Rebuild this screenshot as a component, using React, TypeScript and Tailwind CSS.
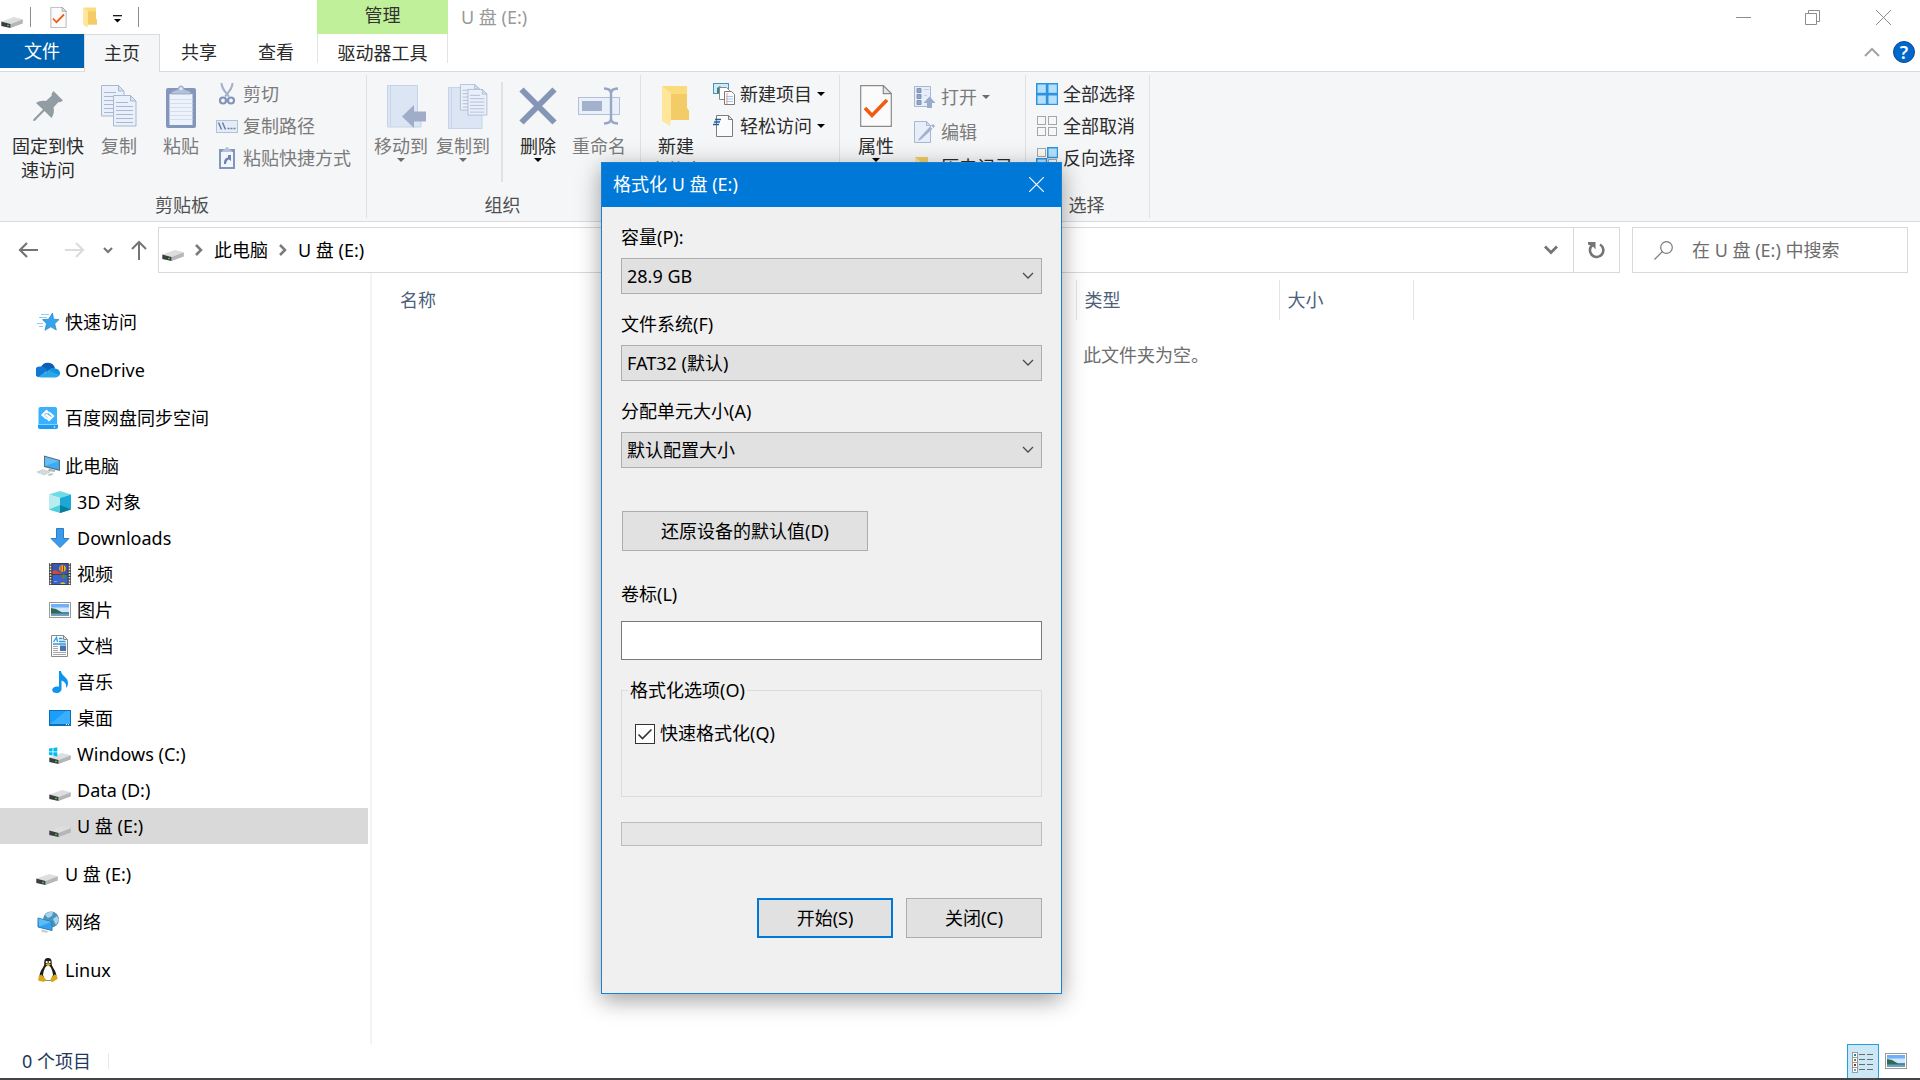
import type { ReactNode } from "react";

type IconProps = { className?: string };

/* ---------- Icons ---------- */

function DriveShape() {
  return (
    <>
      <path d="M0.5 15.5 13 11l8.8 2.2L9.5 18z" fill="#dcdee0" />
      <path d="M9.5 18 21.8 13.2v4.3L9.5 22z" fill="#b4b6b8" />
      <path d="M0.3 15.5 9.5 18v4L0.3 20z" fill="#3b3d3e" />
      <rect x="6" y="18.8" width="2" height="1.4" fill="#3ec43a" />
    </>
  );
}

function DriveIcon() {
  return (
    <svg viewBox="0 0 22 22" className="size-[22px] shrink-0">
      <DriveShape />
    </svg>
  );
}

function WindowsDriveIcon() {
  return (
    <svg viewBox="0 0 22 22" className="size-[22px] shrink-0">
      <g transform="translate(0 -1)">
        <DriveShape />
      </g>
      <path d="M0 5.6 3.6 5v3.4H0zM4.4 4.9 8.3 4.2v4.2H4.4zM0 9.2h3.6v3.4L0 12.1zM4.4 9.2h3.9v4.2l-3.9-.7z" fill="#00bcf2" />
    </svg>
  );
}

function CheckDocIcon({ className = "h-[21px] w-[17px]" }: IconProps) {
  return (
    <svg viewBox="0 0 32 42" className={className}>
      <path d="M.7.7h22.6l8 8v32.6H.7z" fill="#fbfbfb" stroke="#8a8a8a" strokeWidth="1.2" />
      <path d="M23.3.7v8h8z" fill="#e6e6e6" stroke="#8a8a8a" strokeWidth="1.2" />
      <path d="M5 23l7 7.5L27 15" fill="none" stroke="#f25c10" strokeWidth="3.6" />
    </svg>
  );
}

function FolderIcon({ className = "h-[21px] w-[15px]" }: IconProps) {
  return (
    <svg viewBox="0 0 30 40" className={className}>
      <path d="M1 0h25v22l2 3v9H1z" fill="#fbdc7b" />
      <path d="M9 8h17v14l2 3v9H9z" fill="#f3cc68" />
      <path d="M1 0l9 7v25l-1 8-8-5z" fill="#ffe69b" />
    </svg>
  );
}

function Caret({ className = "text-black" }: IconProps) {
  return (
    <svg viewBox="0 0 8 4" className={`h-1 w-2 shrink-0 ${className}`}>
      <path d="M0 0h8L4 4z" fill="currentColor" />
    </svg>
  );
}

function PinIcon() {
  return (
    <svg viewBox="0 0 30 30" className="size-[30px]">
      <path d="M20.500 0 30 9.500l-3 1.800-1.500-.3-5 5.500c1 4 .3 7-2 10.500l-7-7-9.500 9.800-1.800.2.200-1.800L10 18.500l-7-6.500c3-2.300 6.500-2.800 10-2l5.700-5.200-.2-1.800z" fill="#929ca3" />
    </svg>
  );
}

function PageLines({ x, y }: { x: number; y: number }) {
  return (
    <g transform={`translate(${x} ${y})`}>
      <path d="M.5.5h17l5.500 5.500v25H.5z" fill="#eaf0fa" stroke="#a9b7d4" />
      <path d="M17.500.5V6H23z" fill="#d5e0f2" stroke="#a9b7d4" />
      <path d="M3 7.500h12M3 11.500h17M3 15.500h17M3 19.500h17M3 23.500h17M3 27.500h17" stroke="#a9b7d4" />
    </g>
  );
}

function CopyIcon() {
  return (
    <svg viewBox="0 0 36 42" className="h-[42px] w-9">
      <PageLines x={0} y={0} />
      <PageLines x={12} y={10} />
    </svg>
  );
}

function PasteIcon() {
  return (
    <svg viewBox="0 0 30 43" className="h-[43px] w-[30px]">
      <rect x="0" y="3" width="30" height="40" rx="2" fill="#8496bb" />
      <path d="M3.500 9h23v31h-23z" fill="#eef3fb" />
      <path d="M3.500 14.500h23M3.500 18.500h23M3.500 22.500h23M3.500 26.500h23M3.500 30.500h23M3.500 34.500h23" stroke="#d3deef" />
      <path d="M5 9c0-4 5-3 7-5 0-4 6-4 6 0 2 2 7 1 7 5z" fill="#b5c1da" stroke="#8fa0c2" strokeWidth=".8" />
      <circle cx="15" cy="3.800" r="1.300" fill="#eef3fb" />
    </svg>
  );
}

function ScissorsIcon() {
  return (
    <svg viewBox="0 0 22 22" className="size-[22px]">
      <path d="M5.500 0c0 5 3 8 7.500 13.500M16.500 0c0 5-3 8-7.500 13.500" fill="none" stroke="#a5b1c9" strokeWidth="2" />
      <circle cx="7" cy="17.500" r="3" fill="none" stroke="#8295b8" strokeWidth="2.200" />
      <circle cx="15" cy="17.500" r="3" fill="none" stroke="#8295b8" strokeWidth="2.200" />
    </svg>
  );
}

function PathIcon() {
  return (
    <svg viewBox="0 0 22 22" className="size-[22px]">
      <rect x=".5" y="5.500" width="21" height="12" fill="#e4ecf8" stroke="#b3c0da" />
      <path d="M2.500 7.500l3 7M6.500 7.500l3 7" stroke="#6a7ea6" strokeWidth="1.500" />
      <path d="M11.500 13.500h2M14.500 13.500h2M17.500 13.500h2" stroke="#6a7ea6" strokeWidth="1.600" />
    </svg>
  );
}

function PasteShortcutIcon() {
  return (
    <svg viewBox="0 0 22 22" className="size-[22px]">
      <path d="M3 2h16v20H3z" fill="#8496bb" />
      <path d="M5 5h12v15H5z" fill="#f1f5fc" />
      <path d="M6 5c0-2.500 3-2 3.500-4 .8-1.300 2.200-1.300 3 0 .5 2 3.500 1.500 3.500 4z" fill="#b5c1da" />
      <path d="M8 17c0-4 1-6 4-6.500V8h3v6l-2-1.500c-2 .5-2.500 2-3 4.500z" fill="#6f83aa" />
    </svg>
  );
}

function MoveToIcon() {
  return (
    <svg viewBox="-12 0 52 43" className="h-[43px] w-[52px]">
      <path d="M.5.500h30v27l3.500 3V42H.5z" fill="#dbe5f4" stroke="#c6d3e8" />
      <path d="M3.500.500V42" stroke="#c9d6ea" />
      <path d="M15 31.500 27 20v6.500h12v10H27V43z" fill="#9fadc9" />
    </svg>
  );
}

function CopyToIcon() {
  return (
    <svg viewBox="-10 0 50 45" className="h-[45px] w-[50px]">
      <path d="M.5 3.500h30v24l3.500 3V44.500H.5z" fill="#dbe5f4" stroke="#c6d3e8" />
      <path d="M3.500 3.500V45" stroke="#c9d6ea" />
      <g transform="translate(12 0) scale(.84)">
        <PageLines x={0} y={0} />
        <PageLines x={9} y={6} />
      </g>
    </svg>
  );
}

function DeleteIcon() {
  return (
    <svg viewBox="0 0 38 38" className="size-[38px]">
      <path d="M2.500 2.500l33 33M35.500 2.500l-33 33" stroke="#8495b6" strokeWidth="6" />
    </svg>
  );
}

function RenameIcon() {
  return (
    <svg viewBox="0 0 42 38" className="h-[38px] w-[42px]">
      <rect x=".5" y="10.500" width="41" height="17" fill="#eaf0fa" stroke="#b3c0da" />
      <rect x="4" y="14" width="20" height="10" fill="#a3b1cc" />
      <path d="M26 1.500c4 0 7 1 7 5v25c0 4-3 5-7 5M40 1.500c-4 0-7 1-7 5v25c0 4 3 5 7 5" fill="none" stroke="#96a6c4" strokeWidth="2.400" />
    </svg>
  );
}

function NewItemIcon() {
  return (
    <svg viewBox="0 0 22 22" className="size-[22px]">
      <rect x=".5" y=".5" width="15" height="10" fill="#cfeaf8" stroke="#4c90b8" />
      <path d="M4 10V5l3-2 2 3v4z" fill="#3b8579" />
      <path d="M6.500 4.500h7l3 3v9h-10z" fill="#fff" stroke="#8a8a8a" />
      <path d="M11.500 8.500h7l3 3v10h-10z" fill="#fff" stroke="#7a7a7a" />
      <path d="M13 13.500h7M13 16h7M13 18.500h7" stroke="#9cc2ee" />
      <path d="M14 10v11" stroke="#ee9a93" />
    </svg>
  );
}

function EasyAccessIcon() {
  return (
    <svg viewBox="0 0 22 22" className="size-[22px]">
      <path d="M3.500.500h12l4 4v17h-16z" fill="#fbfbfb" stroke="#7d7d7d" />
      <path d="M15.500.500v4h4z" fill="#e8e8e8" stroke="#7d7d7d" />
      <path d="M2 4.500h6M1 7h6M0 9.500h6" stroke="#1f5fa0" strokeWidth="1.400" />
    </svg>
  );
}

function OpenIcon() {
  return (
    <svg viewBox="0 0 22 22" className="size-[22px]">
      <path d="M.5.500h16v20H.5z" fill="#e6eefa" stroke="#a9b7d4" />
      <path d="M3 2.500h4v4H3zM3 8.500h4v4H3zM3 14.500h4v4H3z" fill="#93a4c4" stroke="#7f92b6" />
      <path d="M10 3.500h5M10 9.500h3" stroke="#c2cee2" />
      <path d="M15.500 10.500 21.500 17H18v5h-5v-5H9.500z" fill="#9babc9" />
    </svg>
  );
}

function EditIcon() {
  return (
    <svg viewBox="0 0 22 22" className="size-[22px]">
      <path d="M.5.500h12l4 4v17H.5z" fill="#e6eefa" stroke="#a9b7d4" />
      <path d="M12.500.500v4h4z" fill="#d3deef" stroke="#a9b7d4" />
      <path d="M5 17.500 16 5.500l2.500 2.500L7 18.500l-3 1.500zM17 4.500l2-1.500 2 2-1.500 2z" fill="#a3b2ce" />
    </svg>
  );
}

function HistoryIcon() {
  return (
    <svg viewBox="0 0 22 22" className="size-[22px]">
      <path d="M1 1h13v19H1z" fill="#f1cb66" />
      <path d="M1 1l6 5v15l-6-2z" fill="#ffe69b" />
      <circle cx="15" cy="15" r="6" fill="#4aa564" />
    </svg>
  );
}

function TilesIcon({ on }: { on: boolean[] }) {
  return (
    <svg viewBox="0 0 22 22" className="size-[22px]">
      {on.map((lit, i) => (
        <rect
          key={i}
          x={(i % 2) * 11 + (lit ? 0.75 : 1.5)}
          y={Math.floor(i / 2) * 11 + (lit ? 0.75 : 1.5)}
          width={lit ? 9.8 : 8}
          height={lit ? 9.8 : 8}
          fill={lit ? "#b4e0fd" : "#f7f7f7"}
          stroke={lit ? "#2e93de" : "#a6a6a6"}
          strokeWidth={lit ? 1.5 : 1}
        />
      ))}
    </svg>
  );
}

function StarIcon() {
  return (
    <svg viewBox="0 0 24 22" className="h-[22px] w-6 shrink-0">
      <path d="M16.500 2l1 6.200 5.500.4-4.300 4.200 1.600 6.200-5.500-3.200-5.800 3.500 1.500-6.500L6.500 8.600l6-.4z" fill="#35a4ec" stroke="#1d84d0" strokeWidth=".7" />
      <path d="M5 3.500h8M3 6.500h8M1 12.500h6M3 15.500h4" stroke="#8fcdf5" />
    </svg>
  );
}

function OneDriveIcon() {
  return (
    <svg viewBox="0 0 24 22" className="h-[22px] w-6 shrink-0">
      <path d="M5 8a7.500 7.500 0 0 1 14 1.300L12 14z" fill="#0a5fb4" />
      <path d="M4.500 7.500c3 0 5 1 7.500 3.500L3 18.300a5.300 5.300 0 0 1 1.500-10.800z" fill="#0f78d4" />
      <path d="M12 11c3-2.500 6-2.500 8-1.300a4.500 4.500 0 0 1 3 7.300L12 12z" fill="#1490df" />
      <path d="M2.500 17.500 13 11.200 23.300 16c-.7 1.500-2 2.500-3.800 2.500h-14c-1.200 0-2.200-.3-3-1z" fill="#28a8ea" />
    </svg>
  );
}

function BaiduIcon() {
  return (
    <svg viewBox="0 0 24 24" className="size-6 shrink-0">
      <rect x="2.500" y="1" width="18.500" height="22" rx="2" fill="#3bb0ff" />
      <path d="M2 18.500h20V21a2 2 0 0 1-2 2H4a2 2 0 0 1-2-2z" fill="#1c9bf7" />
      <path d="M2 18.500h20" stroke="#8ad4ff" />
      <path d="M12.500 7 10.500 5 6.500 9l4 3.500M11 12l2 2 4-4-4-3.500M9.500 8.500l4.500 3" fill="none" stroke="#fff" strokeWidth="2.200" />
      <circle cx="18.500" cy="21" r=".8" fill="#fff" />
    </svg>
  );
}

function ComputerIcon() {
  return (
    <svg viewBox="0 0 24 22" className="h-[22px] w-6 shrink-0">
      <path d="M8 .5 24 5v11L8 12z" fill="#5d6f7d" />
      <path d="M9 2l14 4v8.500L9 11z" fill="#3cabf2" />
      <path d="M9 2l14 4-14 5z" fill="#62c0f8" />
      <path d="M13 13.500l6 1.500v2l-7-1z" fill="#b0b8bd" />
      <path d="M1 17l6-2.500L14 17l-6 3z" fill="#d5dade" stroke="#aab1b6" strokeWidth=".7" strokeDasharray="1.500 1" />
      <path d="M11 20l4-2 3 1-4 2z" fill="#bfc6ca" />
    </svg>
  );
}

function CubeIcon() {
  return (
    <svg viewBox="0 0 22 22" className="size-[22px] shrink-0">
      <path d="M11 0l11 3.500L11 7 0 3.500z" fill="#6edbe6" />
      <path d="M0 3.500 11 7v15L0 18.500z" fill="#b9ecf0" />
      <path d="M11 7l11-3.500v15L11 22z" fill="#1aa9d6" />
      <path d="M11 14l11 4.500L11 22z" fill="#077f9c" />
      <path d="M0 18.500 11 14v8z" fill="#4fd0dc" />
    </svg>
  );
}

function DownloadIcon() {
  return (
    <svg viewBox="0 0 22 22" className="size-[22px] shrink-0">
      <path d="M7.500 1.500h7v10H20L11 20.500 2 11.500h5.500z" fill="#3d9ae8" stroke="#2a7fcb" />
    </svg>
  );
}

function VideoIcon() {
  return (
    <svg viewBox="0 0 22 22" className="size-[22px] shrink-0">
      <rect width="22" height="22" fill="#3f3f3f" />
      <path d="M1.500 0v22M20.500 0v22" stroke="#e9e9e9" strokeWidth="1.600" strokeDasharray="1.600 1.200" />
      <rect x="3.500" y="1" width="15" height="10" fill="#3457b8" />
      <rect x="3.500" y="12" width="15" height="9" fill="#3765cf" />
      <path d="M3.500 8l3-1 4 2.500 4 1.500h-11z" fill="#d2493c" />
      <circle cx="13.500" cy="5.500" r="3.300" fill="#e9b81c" />
      <path d="M11.500 3h1v5h-1zM14 2.500h1v6h-1z" fill="#b8281d" />
      <circle cx="14.500" cy="13.500" r="2.300" fill="#2f8f48" />
      <path d="M14 12h1v4h-1z" fill="#e0452c" />
      <path d="M11 21a3 3 0 0 1 5.500 0z" fill="#f0c41c" />
      <path d="M5 18.500h3" stroke="#7fa6ee" />
    </svg>
  );
}

function PictureIcon() {
  return (
    <svg viewBox="0 0 22 22" className="size-[22px] shrink-0">
      <rect x=".5" y="3.500" width="21" height="15" fill="#fff" stroke="#9a9a9a" />
      <path d="M2 5h18v12H2z" fill="#6fb0f7" />
      <path d="M2 8.500h18V13H2z" fill="#cfe6fb" />
      <path d="M2 9l5 1 6 3.500 7 0v2H2z" fill="#2f6b52" />
      <path d="M2 14.500h18V17H2z" fill="#6f9fc4" />
    </svg>
  );
}

function DocumentIcon() {
  return (
    <svg viewBox="0 0 22 22" className="size-[22px] shrink-0">
      <path d="M2.500.500h12l4 4v17h-16z" fill="#fbfbfb" stroke="#8a8a8a" />
      <path d="M14.500.500v4h4z" fill="#e4e4e4" stroke="#8a8a8a" />
      <path d="M4.500 7 7.500 2.500 8.500 7M10 3.500h3.500M10 6.500h6.500M4 9h13" fill="none" stroke="#2b9be0" strokeWidth="1.300" />
      <path d="M4 11.500h5M4 13.500h5M4 15.500h5M4 17.500h13M4 19.500h13" stroke="#a9a9a9" />
      <path d="M11 10.500h6V16h-6z" fill="#4676ad" />
    </svg>
  );
}

function MusicIcon() {
  return (
    <svg viewBox="0 0 22 22" className="size-[22px] shrink-0">
      <path d="M10 0h2c.5 5 7 6 7 12 0 2-.5 3.500-2 5 .8-4.500-1.500-6.500-4.500-7.500V18c0 2.500-2.500 4-5 4S3.200 20.800 3.200 19c0-2.500 3.800-4.300 6.800-3.300z" fill="#0c95f0" />
    </svg>
  );
}

function DesktopIcon() {
  return (
    <svg viewBox="0 0 22 22" className="size-[22px] shrink-0">
      <rect x=".5" y="3.500" width="21" height="15" fill="#1a9dfb" stroke="#0b6fb8" />
      <path d="M1 17 17 4h4v13z" fill="#3baefd" />
      <path d="M1 17.500h20" stroke="#0b6fb8" />
      <path d="M17 17.500h1M19 17.500h1" stroke="#fff" />
    </svg>
  );
}

function NetworkIcon() {
  return (
    <svg viewBox="0 0 24 22" className="h-[22px] w-6 shrink-0">
      <circle cx="15" cy="8.500" r="8" fill="#4c93bd" />
      <path d="M9 4c2-3 6-3.500 8-3l-1 4-4 2zM17 8l4-3 2 4-3 5z" fill="#a8d4ea" />
      <path d="M2 7l14 4v8.500L2 16z" fill="#31a0ee" stroke="#2a7db5" />
      <path d="M2.500 7.500 15 11 3 15.500z" fill="#5cbcf8" />
      <path d="M6 18.500l6 1.500-1 2-6-1.500z" fill="#c7ced2" />
    </svg>
  );
}

function TuxIcon() {
  return (
    <svg viewBox="0 0 24 24" className="size-6 shrink-0">
      <path d="M12 0c-3 0-4 2-3.700 6 0 3-4.300 6-4.800 12l3 5h11l3-5c-.5-6-4.800-9-4.800-12C16 2 15 0 12 0z" fill="#1c1c1c" />
      <path d="M12 7.500c-2.500 0-4.500 5-5 9.500l2 5.500h6l2-5.500c-.5-4.500-2.500-9.500-5-9.500z" fill="#fff" />
      <circle cx="10.700" cy="4.200" r="1.100" fill="#fff" />
      <circle cx="13.600" cy="4.200" r="1.100" fill="#fff" />
      <path d="M9.500 6.500 12 5l3 1.500L12 8.500z" fill="#e8a90c" />
      <path d="M5.500 16.500 10 21.500c0 2-2 2.500-4 2l-3.500-.8c-.8-1 .3-3 .2-4.500zM18.500 16.500 15 20c-1 3 0 4.500 2 3.700l4.800-2.900c0-1.500-1.300-2.800-1.800-4z" fill="#dca516" />
    </svg>
  );
}

function CrumbChevron() {
  return (
    <svg viewBox="0 0 8 12" className="h-3 w-2 shrink-0">
      <path d="M1 1l5 5-5 5" fill="none" stroke="#7a7a7a" strokeWidth="2.500" />
    </svg>
  );
}

/* ---------- Ribbon ---------- */

type BigButtonProps = { icon: ReactNode; lines: string[]; width: string; muted?: boolean; caret?: boolean };

function BigButton({ icon, lines, width, muted, caret }: BigButtonProps) {
  return (
    <button type="button" className={`flex flex-col items-center ${width} ${muted ? "text-[#7b7b7b]" : "text-[#2b2b2b]"}`}>
      <span className="flex h-12 items-center justify-center">{icon}</span>
      <span className="mt-1 flex flex-col whitespace-nowrap">
        {lines.map((line) => (
          <span key={line}>{line}</span>
        ))}
      </span>
      {caret && <Caret className={muted ? "text-[#6d6d6d]" : "text-black"} />}
    </button>
  );
}

type SmallButtonProps = { icon: ReactNode; label: string; muted?: boolean; caret?: boolean; height?: string };

function SmallButton({ icon, label, muted, caret, height = "h-8" }: SmallButtonProps) {
  return (
    <button type="button" className={`flex items-center gap-[5px] whitespace-nowrap ${height} ${muted ? "text-[#7b7b7b]" : "text-[#2b2b2b]"}`}>
      {icon}
      <span>{label}</span>
      {caret && <Caret className={muted ? "text-[#6d6d6d]" : "text-black"} />}
    </button>
  );
}

function RibbonGroup({ label, width, children }: { label: string; width: string; children: ReactNode }) {
  return (
    <section aria-label={label} className={`my-[3px] flex shrink-0 flex-col justify-between border-r border-[#dfe1e3] ${width}`}>
      <div className="flex h-[119px] items-start overflow-hidden pt-[7px]">{children}</div>
      <div className="pb-px pr-[2px] text-center text-[#505050]">{label}</div>
    </section>
  );
}

function Ribbon() {
  return (
    <div className="flex h-[151px] border-y border-[#dadbdc] bg-[#f5f6f7]">
      <RibbonGroup label="剪贴板" width="w-[367px]">
        <BigButton icon={<PinIcon />} lines={["固定到快", "速访问"]} width="ml-2 w-20 text-center" />
        <BigButton icon={<CopyIcon />} lines={["复制"]} width="w-[62px]" muted />
        <BigButton icon={<PasteIcon />} lines={["粘贴"]} width="w-[62px]" muted />
        <div className="-mt-1 ml-1 flex flex-col">
          <SmallButton icon={<ScissorsIcon />} label="剪切" muted />
          <SmallButton icon={<PathIcon />} label="复制路径" muted />
          <SmallButton icon={<PasteShortcutIcon />} label="粘贴快捷方式" muted />
        </div>
      </RibbonGroup>
      <RibbonGroup label="组织" width="w-[274px]">
        <BigButton icon={<MoveToIcon />} lines={["移动到"]} width="ml-[3px] w-[62px]" muted caret />
        <BigButton icon={<CopyToIcon />} lines={["复制到"]} width="w-[62px]" muted caret />
        <div className="ml-[7px] mr-[5px] h-[100px] w-[2px] bg-[#e0e2e4]" />
        <BigButton icon={<DeleteIcon />} lines={["删除"]} width="w-[60px]" caret />
        <BigButton icon={<RenameIcon />} lines={["重命名"]} width="w-[62px]" muted />
      </RibbonGroup>
      <RibbonGroup label="新建" width="w-[199px]">
        <BigButton icon={<FolderIcon className="h-10 w-[30px]" />} lines={["新建", "文件夹"]} width="ml-1 w-[62px] text-center" />
        <div className="-mt-1 ml-1.5 flex flex-col">
          <SmallButton icon={<NewItemIcon />} label="新建项目" caret />
          <SmallButton icon={<EasyAccessIcon />} label="轻松访问" caret />
        </div>
      </RibbonGroup>
      <RibbonGroup label="打开" width="w-[186px]">
        <BigButton icon={<CheckDocIcon className="h-[42px] w-8" />} lines={["属性"]} width="ml-1.5 w-[60px]" caret />
        <div className="-mt-[3px] ml-2 flex flex-col">
          <SmallButton icon={<OpenIcon />} label="打开" muted caret height="h-[35px]" />
          <SmallButton icon={<EditIcon />} label="编辑" muted height="h-[35px]" />
          <SmallButton icon={<HistoryIcon />} label="历史记录" height="h-[35px]" />
        </div>
      </RibbonGroup>
      <RibbonGroup label="选择" width="w-[124px]">
        <div className="-mt-1 ml-[10px] flex flex-col">
          <SmallButton icon={<TilesIcon on={[true, true, true, true]} />} label="全部选择" />
          <SmallButton icon={<TilesIcon on={[false, false, false, false]} />} label="全部取消" />
          <SmallButton icon={<TilesIcon on={[false, true, true, false]} />} label="反向选择" />
        </div>
      </RibbonGroup>
    </div>
  );
}

/* ---------- Title bar and tabs ---------- */

function TitleBar() {
  return (
    <header className="flex h-[34px] items-center">
      <div className="flex w-[317px] shrink-0 items-center pl-px">
        <DriveIcon />
        <span className="ml-[7px] h-5 w-px bg-[#8c8c8c]" />
        <button type="button" aria-label="属性" className="ml-[19px]">
          <CheckDocIcon />
        </button>
        <button type="button" aria-label="新建文件夹" className="ml-4">
          <FolderIcon />
        </button>
        <button type="button" aria-label="自定义快速访问工具栏" className="ml-[15px] mt-1">
          <svg viewBox="0 0 9 8" className="h-2 w-[9px]">
            <path d="M0 .7h9" stroke="#000" strokeWidth="1.200" />
            <path d="M1 4h7L4.500 7.500z" />
          </svg>
        </button>
        <span className="ml-4 h-5 w-px bg-[#8c8c8c]" />
      </div>
      <div className="flex h-full w-[131px] items-center justify-center bg-[#c1f09b] pb-1 text-[#333]">管理</div>
      <h1 className="ml-[13px] text-[#999]">U 盘 (E:)</h1>
      <div className="ml-auto flex h-full items-center gap-[54px] pr-[29px] text-[#8c8c8c]">
        <button type="button" aria-label="最小化">
          <svg viewBox="0 0 15 15" className="size-[15px]"><path d="M0 7.500h15" stroke="currentColor" /></svg>
        </button>
        <button type="button" aria-label="还原">
          <svg viewBox="0 0 15 15" className="size-[15px]" fill="none" stroke="currentColor">
            <path d="M.5 3.500h11v11H.5zM3.500 3V.500h11v11H12" />
          </svg>
        </button>
        <button type="button" aria-label="关闭窗口" className="ml-[2px]">
          <svg viewBox="0 0 15 15" className="size-[15px]"><path d="M0 0l15 15M15 0L0 15" stroke="currentColor" /></svg>
        </button>
      </div>
    </header>
  );
}

function Tabs() {
  return (
    <nav className="flex h-[37px] text-[#2b2b2b]">
      <button type="button" className="h-[34px] w-[84px] bg-[#0063b1] text-white">文件</button>
      <button type="button" className="z-10 -mb-px w-[76px] border border-b-0 border-[#dadbdc] bg-[#f5f6f7] pb-[2px]">主页</button>
      <button type="button" className="w-[78px] pb-px">共享</button>
      <button type="button" className="w-[76px] pb-px">查看</button>
      <button type="button" className="mb-2 ml-[3px] w-[131px] border-x border-[#e2e3e4] pt-[7px]">驱动器工具</button>
      <div className="ml-auto flex items-center gap-[13px] pb-px pr-[5px]">
        <button type="button" aria-label="折叠功能区">
          <svg viewBox="0 0 16 10" className="h-[10px] w-4"><path d="M1 9l7-7 7 7" fill="none" stroke="#a3a3a3" strokeWidth="2" /></svg>
        </button>
        <button type="button" aria-label="帮助" className="flex size-[22px] items-center justify-center rounded-full border border-[#0b4a8a] bg-[#0068cc] font-semibold leading-5 text-white">
          ?
        </button>
      </div>
    </nav>
  );
}

/* ---------- Address bar ---------- */

function AddressBar() {
  return (
    <div className="flex h-[51px] items-center pr-3 pt-[5px]">
      <div className="flex w-[158px] shrink-0 items-center pl-[18px] text-[#6e6e6e]">
        <button type="button" aria-label="后退">
          <svg viewBox="0 0 20 16" className="h-4 w-5"><path d="M9 1 2 8l7 7M2 8h18" fill="none" stroke="#757575" strokeWidth="2.200" /></svg>
        </button>
        <button type="button" aria-label="前进" className="ml-[27px]">
          <svg viewBox="0 0 20 16" className="h-4 w-5"><path d="M11 1l7 7-7 7M18 8H0" fill="none" stroke="#dcdcdc" strokeWidth="2.200" /></svg>
        </button>
        <button type="button" aria-label="最近位置" className="ml-[18px]">
          <svg viewBox="0 0 10 7" className="h-[7px] w-[10px]"><path d="M1 1l4 4 4-4" fill="none" stroke="#757575" strokeWidth="2.200" /></svg>
        </button>
        <button type="button" aria-label="向上" className="ml-[18px]">
          <svg viewBox="0 0 16 20" className="h-5 w-4"><path d="M1 9l7-7 7 7M8 2v18" fill="none" stroke="#757575" strokeWidth="2" /></svg>
        </button>
      </div>
      <div className="flex h-[46px] flex-1 border border-[#d9d9d9]">
        <div className="flex flex-1 items-center pl-[3px]">
          <DriveIcon />
          <span className="mx-[11px] flex"><CrumbChevron /></span>
          <a href="#pc">此电脑</a>
          <span className="mx-[11px] flex"><CrumbChevron /></span>
          <a href="#usb">U 盘 (E:)</a>
          <button type="button" aria-label="历史位置" className="ml-auto mr-[15px]">
            <svg viewBox="0 0 14 10" className="h-[10px] w-[14px]"><path d="M1 1.500l6 6 6-6" fill="none" stroke="#757575" strokeWidth="2.800" /></svg>
          </button>
        </div>
        <button type="button" aria-label="刷新" className="flex w-[46px] items-center justify-center border-l border-[#d9d9d9]">
          <svg viewBox="0 0 17 17" className="size-[17px]">
            <path d="M12 2.500a6.700 6.700 0 1 1-7.500.5" fill="none" stroke="#757575" strokeWidth="2.600" />
            <path d="M0 0h7.500v7.500L5.500 5 0 2.500z" fill="#757575" />
          </svg>
        </button>
      </div>
      <div className="ml-3 flex h-[46px] w-[276px] items-center border border-[#d9d9d9] pl-[21px]">
        <svg viewBox="0 0 19 19" className="size-[19px] shrink-0" fill="none" stroke="#7c7c7c" strokeWidth="1.200">
          <circle cx="12.500" cy="6.500" r="5.800" />
          <path d="M8.500 10.500.5 18.500" />
        </svg>
        <input type="search" aria-label="搜索" placeholder="在 U 盘 (E:) 中搜索" className="ml-[19px] w-full min-w-0 outline-none placeholder:text-[#6d6d6d] placeholder:opacity-100" />
      </div>
    </div>
  );
}

/* ---------- Navigation pane ---------- */

type NavItem = { label: string; icon: ReactNode; child?: boolean; selected?: boolean };

const navItems: NavItem[] = [
  { label: "快速访问", icon: <StarIcon /> },
  { label: "OneDrive", icon: <OneDriveIcon /> },
  { label: "百度网盘同步空间", icon: <BaiduIcon /> },
  { label: "此电脑", icon: <ComputerIcon /> },
  { label: "3D 对象", icon: <CubeIcon />, child: true },
  { label: "Downloads", icon: <DownloadIcon />, child: true },
  { label: "视频", icon: <VideoIcon />, child: true },
  { label: "图片", icon: <PictureIcon />, child: true },
  { label: "文档", icon: <DocumentIcon />, child: true },
  { label: "音乐", icon: <MusicIcon />, child: true },
  { label: "桌面", icon: <DesktopIcon />, child: true },
  { label: "Windows (C:)", icon: <WindowsDriveIcon />, child: true },
  { label: "Data (D:)", icon: <DriveIcon />, child: true },
  { label: "U 盘 (E:)", icon: <DriveIcon />, child: true, selected: true },
  { label: "U 盘 (E:)", icon: <DriveIcon /> },
  { label: "网络", icon: <NetworkIcon /> },
  { label: "Linux", icon: <TuxIcon /> },
];

function NavPane() {
  return (
    <aside className="w-[372px] shrink-0 border-r-2 border-[#f3f3f3] pr-[2px] pt-[19px]">
      <ul>
        {navItems.map((item, i) => (
          <li key={i} className={item.child ? "" : "mt-3"}>
            <a
              href="#nav"
              className={`flex h-9 items-center ${item.child ? "gap-[6px] pl-[49px]" : "pl-9"} ${item.selected ? "bg-[#d9d9d9]" : ""}`}
            >
              {item.child ? item.icon : <span className="flex w-[29px]">{item.icon}</span>}
              {item.label}
            </a>
          </li>
        ))}
      </ul>
    </aside>
  );
}

function FileList() {
  return (
    <main className="min-w-0 flex-1">
      <table className="mt-[7px] w-[1042px] table-fixed text-left text-[#4c607a]">
        <thead>
          <tr className="h-10">
            <th scope="col" className="w-[704px] border-r border-[#e5e5e5] pl-7 font-normal">名称</th>
            <th scope="col" className="w-[203px] border-r border-[#e5e5e5] pl-2 font-normal">类型</th>
            <th scope="col" className="border-r border-[#e5e5e5] pl-2 font-normal">大小</th>
          </tr>
        </thead>
      </table>
      <p className="mt-[23px] text-center text-[#6d6d6d]">此文件夹为空。</p>
    </main>
  );
}

function StatusBar() {
  return (
    <footer className="flex h-[36px] items-center border-b-2 border-[#444448] pr-[13px]">
      <span className="pl-[22px] text-[#1e395b]">0 个项目</span>
      <span className="ml-[17px] h-4 w-px bg-[#e8e8e8]" />
      <div className="ml-auto flex h-full items-center gap-[6px]">
        <button type="button" aria-label="详细信息" className="flex h-full w-8 items-center justify-center border border-b-0 border-[#26a0da] bg-[#cce8f6]">
          <svg viewBox="0 0 22 22" className="size-[22px]">
            {[0, 1, 2, 3].map((r) => (
              <g key={r} transform={`translate(0 ${r * 5})`}>
                <rect x=".5" y="1.500" width="5" height="5" fill="#fff" stroke="#9b9b9b" />
                <rect x="2" y="3" width="2" height="2" fill={["#2f8296", "#5c8c3a", "#a8301c", "#6e9fc8"][r]} />
                <path d="M7 3.500h6M15 3.500h6" stroke="#6b6b6b" />
              </g>
            ))}
          </svg>
        </button>
        <button type="button" aria-label="大缩略图">
          <PictureIcon />
        </button>
      </div>
    </footer>
  );
}

/* ---------- Format dialog ---------- */

function SelectField({ id, label, value }: { id: string; label: string; value: string }) {
  return (
    <div className="mb-[19px]">
      <label htmlFor={id} className="block">{label}</label>
      <div className="relative mt-[9px]">
        <select id={id} defaultValue={value} className="block h-9 w-full appearance-none border border-[#adadad] bg-[#e1e1e1] pl-[5px]">
          <option>{value}</option>
        </select>
        <svg viewBox="0 0 12 8" className="pointer-events-none absolute right-2 top-[14px] h-2 w-3">
          <path d="M1 1l5 5 5-5" fill="none" stroke="#4a4a4a" strokeWidth="1.300" />
        </svg>
      </div>
    </div>
  );
}

function FormatDialog() {
  return (
    <div
      role="dialog"
      aria-labelledby="format-title"
      className="absolute left-[601px] top-[162px] z-20 w-[461px] border border-[#1a80d2] bg-[#f0f0f0] text-black shadow-[0_6px_22px_rgba(0,0,0,0.38)]"
    >
      <div className="flex h-11 items-center justify-between bg-[#0078d7] pb-[2px] pl-[11px] pr-[17px] text-white">
        <h2 id="format-title">格式化 U 盘 (E:)</h2>
        <button type="button" aria-label="关闭">
          <svg viewBox="0 0 15 15" className="size-[15px]"><path d="M0 0l15 15M15 0L0 15" stroke="currentColor" strokeWidth="1.200" /></svg>
        </button>
      </div>
      <form className="px-[19px] pb-[55px] pt-[19px] leading-[23px]">
        <SelectField id="capacity" label="容量(P):" value="28.9 GB" />
        <SelectField id="filesystem" label="文件系统(F)" value="FAT32 (默认)" />
        <SelectField id="unit" label="分配单元大小(A)" value="默认配置大小" />
        <button type="button" className="ml-px mt-[43px] block h-10 w-[246px] border border-[#adadad] bg-[#e1e1e1]">还原设备的默认值(D)</button>
        <label htmlFor="volume" className="mt-8 block">卷标(L)</label>
        <input id="volume" type="text" className="mt-[15px] block h-[39px] w-full border border-[#7a7a7a] bg-white px-1 outline-none" />
        <fieldset className="mt-[19px] h-[118px] border border-[#dcdcdc] pl-[13px]">
          <legend className="-ml-[7px] px-[2px]">格式化选项(O)</legend>
          <label className="mt-5 flex items-center gap-[5px]">
            <span className="relative flex">
              <input type="checkbox" defaultChecked className="peer size-5 appearance-none border border-[#333] bg-white" />
              <svg viewBox="0 0 20 20" className="pointer-events-none invisible absolute inset-0 size-5 peer-checked:visible">
                <path d="M3.500 10.500l4 4 9-9" fill="none" stroke="#333" strokeWidth="1.600" />
              </svg>
            </span>
            快速格式化(Q)
          </label>
        </fieldset>
        <div role="progressbar" aria-label="格式化进度" aria-valuenow={0} className="mt-[25px] h-6 border border-[#bcbcbc] bg-[#e6e6e6]" />
        <div className="mt-[52px] flex justify-end gap-[13px]">
          <button type="button" className="h-10 w-[136px] border-2 border-[#0078d7] bg-[#e1e1e1]">开始(S)</button>
          <button type="button" className="h-10 w-[136px] border border-[#adadad] bg-[#e1e1e1]">关闭(C)</button>
        </div>
      </form>
    </div>
  );
}

export default function App() {
  return (
    <div className="relative flex min-h-screen flex-col bg-white font-['Noto_Sans','Noto_Sans_CJK_SC',sans-serif] text-[18px] leading-6 text-black">
      <TitleBar />
      <Tabs />
      <Ribbon />
      <AddressBar />
      <div className="flex flex-1">
        <NavPane />
        <FileList />
      </div>
      <StatusBar />
      <FormatDialog />
    </div>
  );
}
